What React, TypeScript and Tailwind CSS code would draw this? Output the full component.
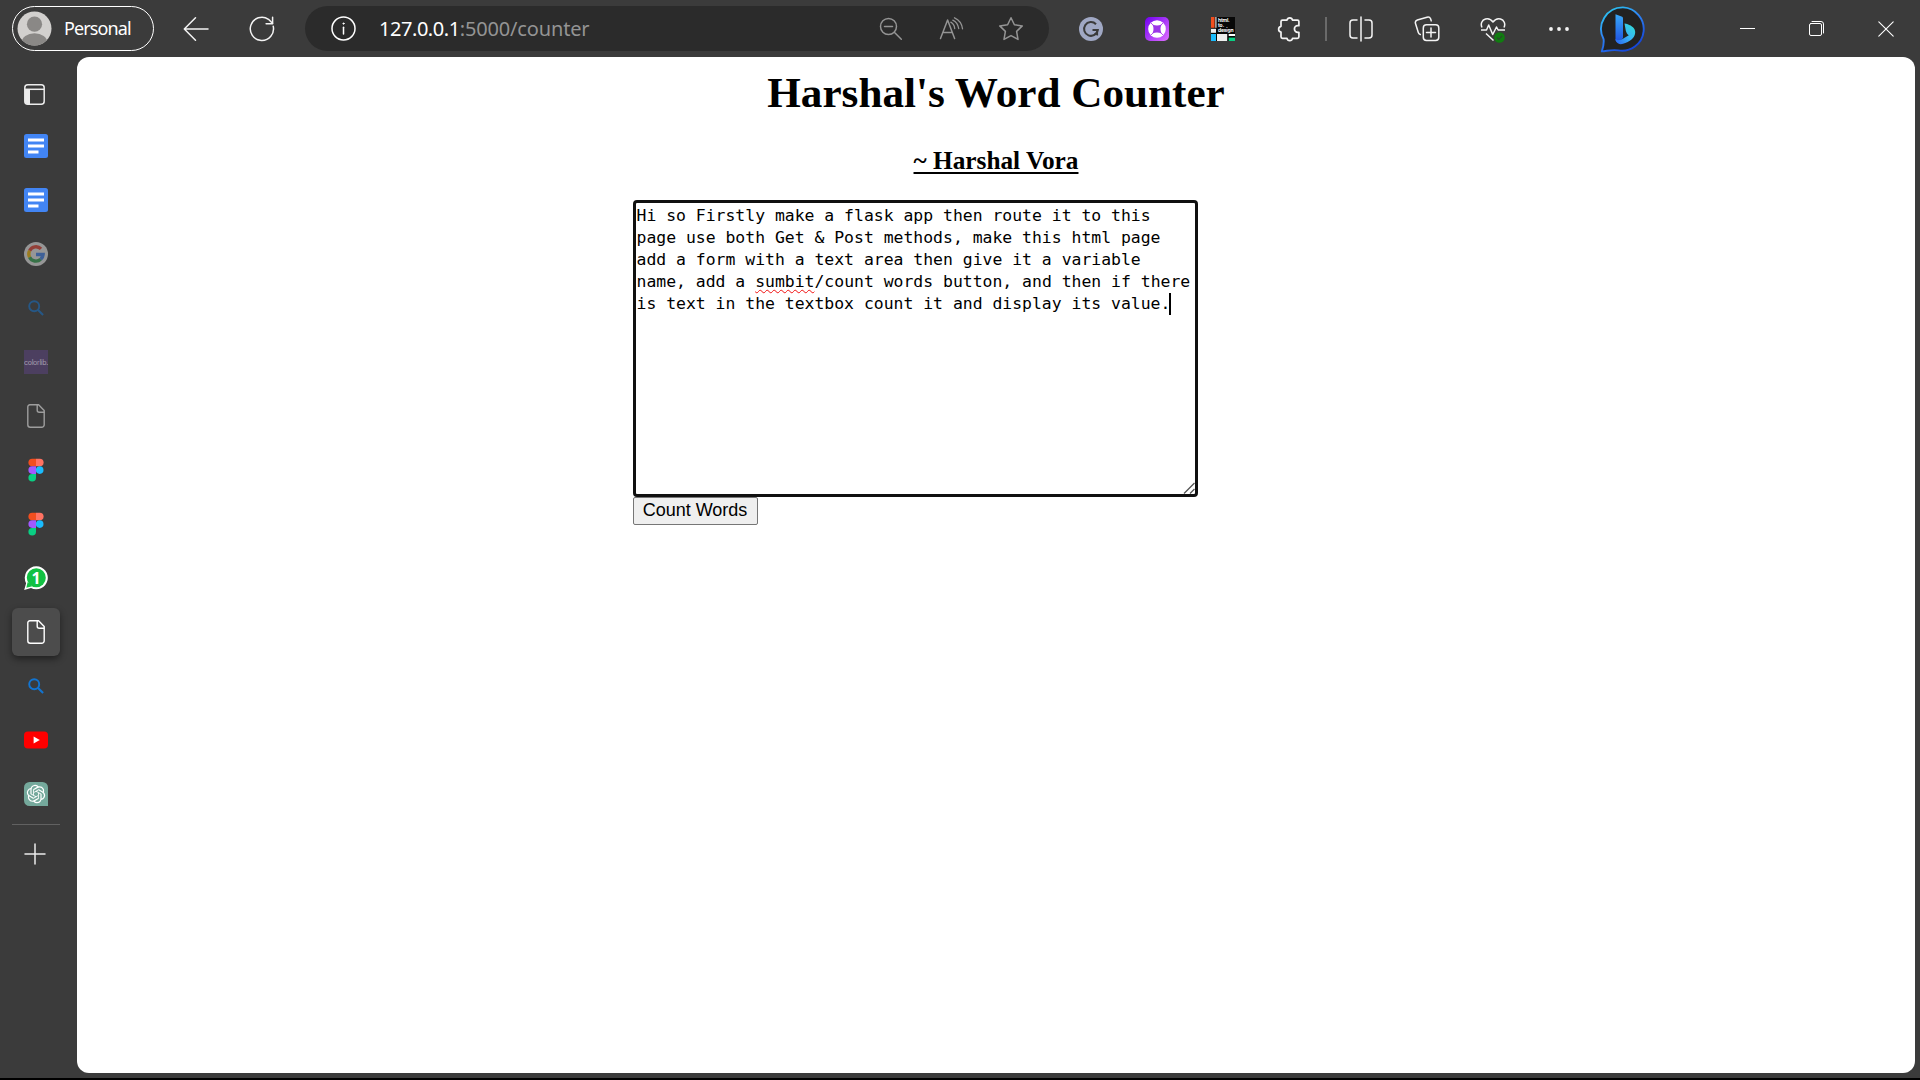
import React from "react";

type IconProps = { size?: number; box?: string; className?: string; children: React.ReactNode };

function Svg({ size = 24, box, className = "", children }: IconProps) {
  return (
    <svg
      width={size}
      height={size}
      viewBox={box ?? `0 0 ${size} ${size}`}
      fill="none"
      stroke="currentColor"
      strokeWidth="1.5"
      strokeLinecap="round"
      strokeLinejoin="round"
      className={`shrink-0 ${className}`}
    >
      {children}
    </svg>
  );
}

function ToolCell({ children }: { children: React.ReactNode }) {
  return <div className="flex h-full w-[66px] shrink-0 items-center justify-center">{children}</div>;
}

function WindowCell({ children }: { children: React.ReactNode }) {
  return <div className="flex h-full w-[69px] shrink-0 items-center justify-center text-white">{children}</div>;
}

function Profile() {
  return (
    <div className="ml-3 flex h-[45px] w-[142px] shrink-0 items-center rounded-full border-[1.5px] border-white pl-1">
      <svg width="35" height="35" viewBox="0 0 35 35" className="shrink-0">
        <defs>
          <clipPath id="face">
            <circle cx="17.5" cy="17.5" r="17" />
          </clipPath>
        </defs>
        <circle cx="17.5" cy="17.5" r="17" fill="#d2d0ce" />
        <g clipPath="url(#face)" fill="#8a8886">
          <circle cx="17.5" cy="13.2" r="7.6" />
          <ellipse cx="17.5" cy="32" rx="13" ry="9.8" />
        </g>
      </svg>
      <span className="ml-[12px] font-['Noto_Sans'] text-[18px] tracking-[-0.9px] text-white">Personal</span>
    </div>
  );
}

function AddressBar() {
  return (
    <div className="ml-[10px] flex h-[45px] w-[744px] shrink-0 items-center rounded-full bg-[#2b2b2b] pl-[26px]">
      <Svg size={25} className="text-white">
        <circle cx="12.5" cy="12.5" r="11.5" />
        <path d="M12.5 11.3v6.7" />
        <circle cx="12.5" cy="7.6" r="0.6" fill="currentColor" strokeWidth="1" />
      </Svg>
      <div className="ml-[23px] flex w-[480px] font-['Noto_Sans'] text-[20px] leading-[28px]">
        <span className="tracking-[-0.45px] text-white">127.0.0.1</span>
        <span className="tracking-[-0.15px] text-[#949494]">:5000/counter</span>
      </div>
      <Svg size={24} className="ml-[20px] text-[#949494]">
        <circle cx="9.5" cy="9.5" r="8" />
        <path d="M5.5 9.5h8M15.3 15.3l7 7" />
      </Svg>
      <Svg size={26} className="ml-[35px] text-[#949494]">
        <path d="M2.5 22.5L9.6 4l7 18.500M5 16.400h9.300" />
        <path d="M12.8 6.200c2 1 3.600 3.400 3.900 6.300M16.500 1.800c4.500 2 7.400 5.800 8 11M14.800 4.200c3.200 1.600 5.300 4.500 5.900 8.300" strokeWidth="1.300" />
      </Svg>
      <Svg size={26} className="ml-[34px] text-[#949494]">
        <path d="M13 1.700l3.400 7.100 7.900 1.100-5.700 5.500 1.400 8L13 19.600l-7 3.800 1.400-8L1.700 9.900l7.900-1.100z" />
      </Svg>
    </div>
  );
}

function Grammarly() {
  return (
    <svg width="24" height="24" viewBox="0 0 24 24">
      <circle cx="12" cy="12" r="12" fill="#a0a8c4" />
      <path d="M17 7.200A6.900 6.900 0 1 0 18.800 13H13.500" fill="none" stroke="#3b3b3b" strokeWidth="2" />
      <path d="M18.300 13v5.500M18.800 17.300h-3.500" fill="none" stroke="#3b3b3b" strokeWidth="1.600" />
    </svg>
  );
}

function PurpleExt() {
  return (
    <svg width="24" height="24" viewBox="0 0 24 24">
      <defs>
        <linearGradient id="violet" x1="0" y1="0" x2="1" y2="1">
          <stop offset="0" stopColor="#7000f0" />
          <stop offset="1" stopColor="#e070ff" />
        </linearGradient>
      </defs>
      <rect width="24" height="24" rx="5" fill="url(#violet)" />
      <circle cx="12" cy="12" r="8.800" fill="#fff" />
      <path d="M7.500 7.500q4.500 2 9 0q-2 4.500 0 9q-4.500-2-9 0q2-4.500 0-9z" fill="#9c35e8" />
      <path d="M8 8L5.500 5.500M16 8l2.500-2.500M8 16l-2.500 2.500M16 16l2.500 2.500" stroke="#b44df0" strokeWidth="1" />
    </svg>
  );
}

function HtmlToDesign() {
  return (
    <div className="relative h-6 w-6">
      <svg width="24" height="24" viewBox="0 0 24 24">
        <rect width="24" height="24" fill="#080808" />
        <rect width="3.600" height="10.800" fill="#f24e1e" />
        <rect x="4.300" width="1.200" height="10.800" fill="#ddd" />
        <rect y="11.800" width="5" height="4" fill="#eee" />
        <rect y="17" width="5" height="7" fill="#1abcfe" />
        <rect x="6" y="17" width="10.200" height="7" fill="#eee" />
        <rect x="17.700" y="17" width="6.300" height="2" fill="#fff" />
        <rect x="17.700" y="20.600" width="6.300" height="3.400" fill="#0acf83" />
      </svg>
      <div className="absolute left-[7px] top-[1px] font-['Inter'] text-[5px] font-bold leading-[5px] tracking-[-0.2px] text-white">
        html.
        <br />
        to.
        <br />
        design
      </div>
    </div>
  );
}

function Bing() {
  return (
    <svg width="48" height="48" viewBox="0 0 48 48" className="shrink-0">
      <defs>
        <linearGradient id="ring" x1="0" y1="0" x2="0.600" y2="1">
          <stop offset="0" stopColor="#2ad4f0" />
          <stop offset="0.500" stopColor="#2f86f5" />
          <stop offset="1" stopColor="#1546d8" />
        </linearGradient>
        <linearGradient id="stem" x1="0" y1="0" x2="0" y2="1">
          <stop offset="0" stopColor="#38a8f8" />
          <stop offset="1" stopColor="#1f4fe0" />
        </linearGradient>
        <linearGradient id="bowl" x1="1" y1="0" x2="0" y2="1">
          <stop offset="0" stopColor="#30e0d0" />
          <stop offset="0.500" stopColor="#38b4f8" />
          <stop offset="1" stopColor="#2a62f0" />
        </linearGradient>
      </defs>
      <path
        d="M24 2.400a21.700 21.700 0 1 1-5 43c-5-1-9.500.3-16.200 1C4.400 42 5 38 4.600 34.200A21.700 21.700 0 0 1 24 2.400z"
        fill="#222"
        stroke="url(#ring)"
        strokeWidth="1.900"
        strokeLinejoin="round"
      />
      <path d="M16.500 9.200l6 2.300c1 .4 1.500 1 1.500 2V33l-4.500 5c-1.900-.6-3-2-3-4z" fill="url(#stem)" />
      <path d="M25.500 18.500c4.500.8 8.600 2.800 10.100 6 1.700 4-.3 8.500-4.500 11-4.500 2.800-9 4.900-12.200 2.800-1.800-1.200-2.400-2.800-2.400-4.300 2 2 4.500 1.500 7 0l6.300-3.700c-1.500-1-2.300-2.300-3-4.500z" fill="url(#bowl)" />
    </svg>
  );
}

function Toolbar() {
  return (
    <header className="flex h-[57px] shrink-0 items-center text-[#f4f4f4]">
      <Profile />
      <div className="ml-[9px] flex h-full">
        <ToolCell>
          <Svg size={26}>
            <path d="M25 13H1.500M12.500 1.800L1.300 13l11.200 11.200" />
          </Svg>
        </ToolCell>
        <ToolCell>
          <Svg size={26}>
            <path d="M24.200 10.200A11.600 11.600 0 1 1 19.500 3.300l4 4" />
            <path d="M23.600 1.200v6.500h-6.500" />
          </Svg>
        </ToolCell>
      </div>
      <AddressBar />
      <div className="ml-[9px] flex h-full shrink-0 items-center">
        <ToolCell><Grammarly /></ToolCell>
        <ToolCell><PurpleExt /></ToolCell>
        <ToolCell><HtmlToDesign /></ToolCell>
        <ToolCell>
          <Svg size={26}>
            <path d="M5 5.600a1.500 1.500 0 0 1 1.500-1.500H11A2.800 2.800 0 0 1 16.500 4.100h4.900a1.500 1.500 0 0 1 1.500 1.500V9.700h-1.200a3.300 3.300 0 0 0 0 6.600h1.200v4.500a1.500 1.500 0 0 1-1.500 1.500H16.500A2.800 2.800 0 0 1 11 22.300H6.500A1.500 1.500 0 0 1 5 20.800V16A2.900 2.900 0 0 1 5 10.300z" strokeWidth="1.700" />
          </Svg>
        </ToolCell>
        <div className="ml-[3px] mr-[1px] h-6 w-[1.5px] bg-[#6a6a6a]" />
        <ToolCell>
          <Svg size={26}>
            <path d="M9 4H5a3 3 0 0 0-3 3v12a3 3 0 0 0 3 3h4M17 4h4a3 3 0 0 1 3 3v12a3 3 0 0 1-3 3h-4M13 1v24" />
          </Svg>
        </ToolCell>
        <ToolCell>
          <Svg size={26}>
            <rect x="9.300" y="8.800" width="15.500" height="15.700" rx="3.200" />
            <path d="M17 12v9M12.500 16.600h9" />
            <path d="M6.300 18.500c-1.100-.3-1.700-1-2-2L1.500 7.500c-.5-1.700.4-3 1.800-3.500L13 1.200c1.700-.5 3 .2 3.600 1.600l.6 2" />
          </Svg>
        </ToolCell>
        <ToolCell>
          <svg width="26" height="28" viewBox="0 0 26 28" fill="none" stroke="currentColor" strokeWidth="1.500" strokeLinejoin="round">
            <path d="M2 12.500C.2 8.700 2 5 5.500 4c3-.9 5.700.6 7.500 3 1.800-2.400 4.500-3.900 7.500-3 3.500 1 5.300 4.700 3.500 8.500" />
            <path d="M1 15h5.500l2.200-5 4 9.500L16.500 12l1.700 3H25M6 18.500l7.500 7" />
            <circle cx="19.500" cy="22.500" r="5.300" fill="#107c10" stroke="none" />
            <path d="M17 22.500l1.800 1.800 3.400-3.400" stroke="#2a4a2a" strokeWidth="1.200" />
          </svg>
        </ToolCell>
        <ToolCell>
          <Svg size={22}>
            <g fill="currentColor" stroke="none">
              <circle cx="3" cy="11" r="1.900" />
              <circle cx="11" cy="11" r="1.900" />
              <circle cx="19" cy="11" r="1.900" />
            </g>
          </Svg>
        </ToolCell>
        <div className="flex w-[62px] justify-center"><Bing /></div>
      </div>
      <div className="ml-auto flex h-full">
        <WindowCell>
          <div className="h-[1px] w-[15px] bg-white" />
        </WindowCell>
        <WindowCell>
          <Svg size={15}>
            <rect x="0.500" y="2.500" width="12" height="12" rx="1.500" strokeWidth="1" />
            <path d="M3 .5h9a2.500 2.500 0 0 1 2.500 2.500v9" strokeWidth="1" />
          </Svg>
        </WindowCell>
        <WindowCell>
          <Svg size={16}>
            <path d="M.8.800l14.400 14.400M15.200.800L.8 15.200" strokeWidth="1.100" />
          </Svg>
        </WindowCell>
      </div>
    </header>
  );
}

function TabSlot({ active = false, dim = false, children }: { active?: boolean; dim?: boolean; children: React.ReactNode }) {
  return (
    <div
      className={`mb-1.5 flex h-12 w-12 shrink-0 items-center justify-center rounded-md ${
        active ? "bg-[#4c4c4c] shadow-[0_3px_7px_rgba(0,0,0,0.45)]" : ""
      } ${dim ? "opacity-50" : ""}`}
    >
      {children}
    </div>
  );
}

function Docs() {
  return (
    <svg width="24" height="24" viewBox="0 0 24 24">
      <rect width="24" height="24" rx="2.500" fill="#4285f4" />
      <path d="M4 6h16M4 12h16M4 18h10.500" stroke="#fff" strokeWidth="3" />
    </svg>
  );
}

function Google() {
  return (
    <svg width="24" height="24" viewBox="0 0 24 24">
      <circle cx="12" cy="12" r="12" fill="#f0f0f0" />
      <g fill="none" strokeWidth="3.400">
        <path d="M5.600 8.800A7.100 7.100 0 0 1 17 6.900" stroke="#ea4335" />
        <path d="M5.600 15.200A7.100 7.100 0 0 1 5.600 8.800" stroke="#fbbc05" />
        <path d="M5.600 15.200A7.100 7.100 0 0 0 16.700 17.300" stroke="#34a853" />
        <path d="M12 12.500h7.100A7.100 7.100 0 0 1 16.700 17.300" stroke="#4285f4" />
      </g>
    </svg>
  );
}

function Search() {
  return (
    <svg width="16" height="16" viewBox="0 0 16 16" fill="none" stroke="#1274d0" strokeWidth="1.900">
      <circle cx="6.200" cy="6.200" r="5" />
      <path d="M9.800 9.800l5.300 5.300" strokeWidth="2.100" />
    </svg>
  );
}

function Page() {
  return (
    <Svg size={24} className="text-white">
      <path d="M5.800.8h8.800l5.600 5.700v14.200a2.500 2.500 0 0 1-2.500 2.500H6.300a2.500 2.500 0 0 1-2.500-2.500V2.800a2 2 0 0 1 2-2z" strokeWidth="1.400" />
      <path d="M13.200.8v5.400a2 2 0 0 0 2 2h5" strokeWidth="1.400" />
    </Svg>
  );
}

function Figma() {
  return (
    <svg width="16" height="24" viewBox="0 0 16 24">
      <path d="M8 .7H4.200a3.800 3.800 0 0 0 0 7.600H8z" fill="#f24e1e" />
      <path d="M8 .7h3.800a3.800 3.800 0 0 1 0 7.600H8z" fill="#ff7262" />
      <path d="M8 8.300H4.200a3.800 3.800 0 0 0 0 7.600H8z" fill="#a259ff" />
      <circle cx="11.700" cy="12.100" r="3.800" fill="#1abcfe" />
      <path d="M8 15.900H4.200A3.800 3.800 0 1 0 8 19.700z" fill="#0acf83" />
    </svg>
  );
}

function WhatsApp() {
  return (
    <div className="relative flex h-6 w-6 items-center justify-center">
      <svg width="24" height="24" viewBox="0 0 24 24" className="absolute inset-0">
        <path d="M12.500.3A11.500 11.500 0 1 1 7 22L.2 24l1.900-6.800A11.500 11.500 0 0 1 12.500.3z" fill="#fff" />
        <circle cx="12.300" cy="11.800" r="9.500" fill="#12c143" />
        <path d="M3.700 16l-1.400 5.800 6-1.600z" fill="#12c143" />
      </svg>
      <span className="relative font-['Open_Sans'] text-[16px] font-bold leading-none text-white">1</span>
    </div>
  );
}

function YouTube() {
  return (
    <svg width="24" height="18" viewBox="0 0 24 18">
      <rect y="0.500" width="24" height="17" rx="4" fill="#f00" />
      <path d="M9.600 5.400v7.200l6.200-3.600z" fill="#fff" />
    </svg>
  );
}

function ChatGpt() {
  return (
    <svg width="24" height="24" viewBox="0 0 24 24">
      <path d="M5.500 0h13A5.500 5.500 0 0 1 24 5.500V24H5.500A5.500 5.500 0 0 1 0 18.500v-13A5.500 5.500 0 0 1 5.500 0z" fill="#75a99c" />
      <g transform="translate(2.800 2.800) scale(0.767)" fill="#fff">
        <path d="M22.2819 9.8211a5.9847 5.9847 0 0 0-.5157-4.9108 6.0462 6.0462 0 0 0-6.5098-2.9A6.0651 6.0651 0 0 0 4.9807 4.1818a5.9847 5.9847 0 0 0-3.9977 2.9 6.0462 6.0462 0 0 0 .7427 7.0966 5.98 5.98 0 0 0 .511 4.9107 6.051 6.051 0 0 0 6.5146 2.9001A5.9847 5.9847 0 0 0 13.2599 24a6.0557 6.0557 0 0 0 5.7718-4.2058 5.9894 5.9894 0 0 0 3.9977-2.9001 6.0557 6.0557 0 0 0-.7475-7.0729zm-9.022 12.6081a4.4755 4.4755 0 0 1-2.8764-1.0408l.1419-.0804 4.7783-2.7582a.7948.7948 0 0 0 .3927-.6813v-6.7369l2.02 1.1686a.071.071 0 0 1 .038.052v5.5826a4.504 4.504 0 0 1-4.4945 4.4944zm-9.6607-4.1254a4.4708 4.4708 0 0 1-.5346-3.0137l.142.0852 4.783 2.7582a.7712.7712 0 0 0 .7806 0l5.8428-3.3685v2.3324a.0804.0804 0 0 1-.0332.0615L9.74 19.9502a4.4992 4.4992 0 0 1-6.1408-1.6464zM2.3408 7.8956a4.485 4.485 0 0 1 2.3655-1.9728V11.6a.7664.7664 0 0 0 .3879.6765l5.8144 3.3543-2.0201 1.1685a.0757.0757 0 0 1-.071 0l-4.8303-2.7865A4.504 4.504 0 0 1 2.3408 7.872zm16.5963 3.8558L13.1038 8.364 15.1192 7.2a.0757.0757 0 0 1 .071 0l4.8303 2.7913a4.4944 4.4944 0 0 1-.6765 8.1042v-5.6772a.79.79 0 0 0-.407-.667zm2.0107-3.0231l-.142-.0852-4.7735-2.7818a.7759.7759 0 0 0-.7854 0L9.409 9.2297V6.8974a.0662.0662 0 0 1 .0284-.0615l4.8303-2.7866a4.4992 4.4992 0 0 1 6.6802 4.66zM8.3065 12.863l-2.02-1.1638a.0804.0804 0 0 1-.038-.0567V6.0742a4.4992 4.4992 0 0 1 7.3757-3.4537l-.142.0805L8.704 5.459a.7948.7948 0 0 0-.3927.6813zm1.0976-2.3654l2.602-1.4998 2.6069 1.4998v2.9994l-2.5974 1.4997-2.6067-1.4997z" />
      </g>
    </svg>
  );
}

function Sidebar() {
  return (
    <nav className="flex w-[77px] shrink-0 flex-col pl-3 text-[#ececec]">
      <div className="flex h-[65px] w-[45px] shrink-0 items-center justify-center pt-[10px]">
        <svg width="21" height="21" viewBox="0 0 21 21" fill="none">
          <path d="M1 5.500h5V20H3.500A2.500 2.500 0 0 1 1 17.500z" fill="#ececec" />
          <rect x="0.800" y="0.800" width="19.400" height="19.400" rx="3" stroke="#ececec" strokeWidth="1.500" />
          <path d="M1 5.300h19" stroke="#ececec" strokeWidth="1.500" />
        </svg>
      </div>
      <TabSlot><Docs /></TabSlot>
      <TabSlot><Docs /></TabSlot>
      <TabSlot dim><Google /></TabSlot>
      <TabSlot dim><Search /></TabSlot>
      <TabSlot>
        <div className="flex h-6 w-6 items-center justify-center overflow-hidden bg-[#4c3f60] font-['Inter'] text-[7px] leading-none tracking-[-0.3px] text-[#a49eae]">
          colorlib.
        </div>
      </TabSlot>
      <TabSlot dim><Page /></TabSlot>
      <TabSlot><Figma /></TabSlot>
      <TabSlot><Figma /></TabSlot>
      <TabSlot><WhatsApp /></TabSlot>
      <TabSlot active><Page /></TabSlot>
      <TabSlot><Search /></TabSlot>
      <TabSlot><YouTube /></TabSlot>
      <TabSlot><ChatGpt /></TabSlot>
      <div className="h-[1px] w-12 shrink-0 bg-[#616161]" />
      <div className="mt-[18px] flex w-[46px] justify-center">
        <Svg size={22}>
          <path d="M11 1v20M1 11h20" />
        </Svg>
      </div>
    </nav>
  );
}

function Content() {
  return (
    <main className="flex flex-1 flex-col rounded-[12px] bg-white text-black">
      <h1 className="mt-[11px] text-center font-['Liberation_Serif'] text-[43.2px] font-bold leading-[50px]">
        Harshal's Word Counter
      </h1>
      <h3 className="mt-[27px] text-center font-['Liberation_Serif'] text-[25.3px] font-bold leading-[30px]">
        <span className="underline decoration-2 underline-offset-[3px]">~ Harshal Vora</span>
      </h3>
      <div className="ml-[556px] mt-[25px] flex w-[565px] flex-col items-start">
        <div className="relative h-[297px] w-[565px] whitespace-pre rounded-[4px] border-[3px] border-[#101010] pl-[0.5px] pt-[2px] font-['DejaVu_Sans_Mono'] text-[16.43px] leading-[22px]">
          <div>Hi so Firstly make a flask app then route it to this</div>
          <div>page use both Get &amp; Post methods, make this html page</div>
          <div>add a form with a text area then give it a variable</div>
          <div>
            name, add a{" "}
            <span className="underline decoration-[#f01010] decoration-wavy decoration-[1.2px] underline-offset-[2px]">sumbit</span>
            /count words button, and then if there
          </div>
          <div className="flex items-center">
            is text in the textbox count it and display its value.
            <span className="-ml-px h-[22px] w-[2px] bg-black" />
          </div>
          <svg width="12" height="12" viewBox="0 0 12 12" className="absolute bottom-0 right-0" stroke="#555" strokeWidth="1.300">
            <path d="M1 11.500L11.500 1M7 11.500l4.500-4.500" />
          </svg>
        </div>
        <button className="flex h-[28px] w-[125px] items-center justify-center rounded-[2px] border border-[#767676] bg-[#efefef] pb-[2px] pr-[1px] font-['Liberation_Sans'] text-[18px] leading-none">
          Count Words
        </button>
      </div>
    </main>
  );
}

export default function App() {
  return (
    <div className="flex h-[1080px] w-[1920px] flex-col overflow-hidden border-b-2 border-black bg-[#3b3b3b]">
      <Toolbar />
      <div className="flex flex-1 pb-[5px] pr-[5px]">
        <Sidebar />
        <Content />
      </div>
    </div>
  );
}
